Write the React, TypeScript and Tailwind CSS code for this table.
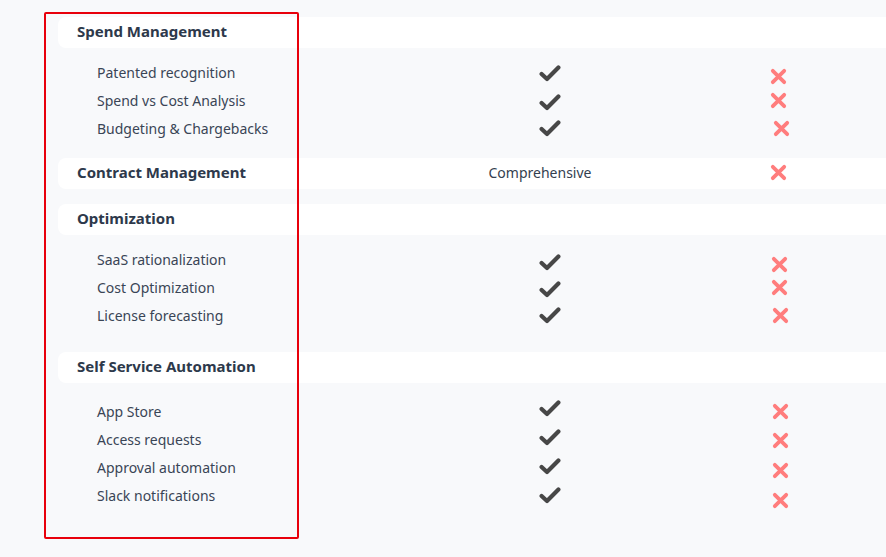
type Row = { label: string; checkDy?: number; crossDy?: number; crossDx?: number };
type Section = { title: string; value?: string; rows: Row[]; before?: string; after: string };

const sections: Section[] = [
  {
    title: 'Spend Management',
    after: 'pb-[15px]',
    rows: [
      { label: 'Patented recognition', checkDy: 0, crossDy: 3 },
      { label: 'Spend vs Cost Analysis', checkDy: 1, crossDy: -1 },
      { label: 'Budgeting & Chargebacks', checkDy: -1, crossDy: -1, crossDx: 3 },
    ],
  },
  { title: 'Contract Management', value: 'Comprehensive', rows: [], after: 'pb-[15px]' },
  {
    title: 'Optimization',
    after: 'pb-[22px]',
    rows: [
      { label: 'SaaS rationalization', checkDy: 2, crossDy: 4, crossDx: 1 },
      { label: 'Cost Optimization', checkDy: 1, crossDy: -1, crossDx: 1 },
      { label: 'License forecasting', checkDy: -1, crossDy: -1, crossDx: 2 },
    ],
  },
  {
    title: 'Self Service Automation',
    before: 'pt-[15px]',
    after: 'pb-[22px]',
    rows: [
      { label: 'App Store', checkDy: -4, crossDy: -1, crossDx: 2 },
      { label: 'Access requests', checkDy: -3, crossDy: 0, crossDx: 2 },
      { label: 'Approval automation', checkDy: -2, crossDy: 2, crossDx: 2 },
      { label: 'Slack notifications', checkDy: -1, crossDy: 4, crossDx: 2 },
    ],
  },
];

const Check = ({ dy = 0 }: { dy?: number }) => (
  <svg width="22" height="17" viewBox="0 0 22 17" className="relative" style={{ top: dy }}>
    <polyline
      points="2.6,9 8,14 19.4,2.6"
      fill="none"
      stroke="#474747"
      strokeWidth="4.2"
      strokeLinecap="round"
      strokeLinejoin="round"
    />
  </svg>
);

const Cross = ({ dy = 0, dx = 0 }: { dy?: number; dx?: number }) => (
  <svg width="17" height="17" viewBox="0 0 17 17" className="relative" style={{ top: dy, left: dx }}>
    <path d="M2.8 2.8L14.2 14.2M14.2 2.8L2.8 14.2" stroke="#ff7d7d" strokeWidth="3.8" strokeLinecap="round" />
  </svg>
);

const App = () => {
  return (
    <div className="relative w-[886px] h-[557px] overflow-hidden bg-[#f8f9fb] font-['Noto_Sans',sans-serif]">
      <div className="pt-[17px] pl-[58px]">
        {sections.map((s) => (
          <div key={s.title} className={s.after}>
            {/* section band */}
            <div className="flex items-center h-[31px] w-[900px] bg-white rounded-l-lg">
              <div className="w-[402px] shrink-0 pl-[19px] pb-[2px] text-[15px] font-bold text-[#2d394b] leading-none">{s.title}</div>
              {s.value ? (
                <>
                  <div className="w-[180px] shrink-0 flex justify-center pr-[20px] pb-[2px] text-[14px] text-[#33404f]">{s.value}</div>
                  <div className="w-[276px] shrink-0 flex justify-center">
                    <Cross dy={-1} />
                  </div>
                </>
              ) : null}
            </div>
            {s.rows.length > 0 && (
              <div className={s.before ?? 'pt-[11px]'}>
                {s.rows.map((r) => (
                  <div key={r.label} className="flex items-center h-[28px] w-[900px]">
                    <div className="w-[402px] shrink-0 pl-[39px] pb-[2px] text-[14px] text-[#3a4556]">{r.label}</div>
                    <div className="w-[180px] shrink-0 flex justify-center">
                      <Check dy={r.checkDy} />
                    </div>
                    <div className="w-[276px] shrink-0 flex justify-center">
                      <Cross dy={r.crossDy} dx={r.crossDx} />
                    </div>
                  </div>
                ))}
              </div>
            )}
          </div>
        ))}
      </div>
      {/* highlight annotation */}
      <div className="absolute left-[44px] top-[12px] w-[255px] h-[527px] border-2 border-[#e8000b] rounded-[2px] pointer-events-none" />
    </div>
  );
};

export default App;
